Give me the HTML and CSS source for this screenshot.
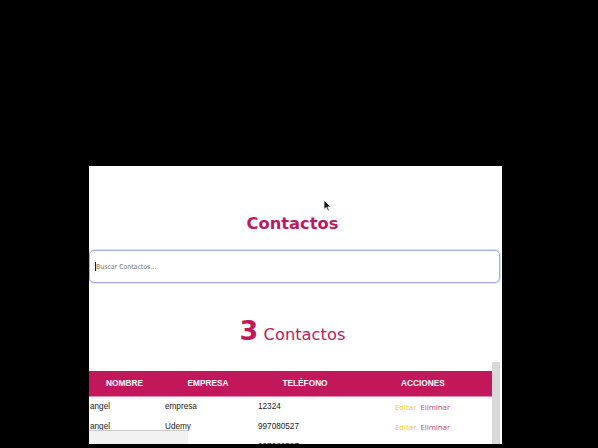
FILE: index.html
```html
<!DOCTYPE html>
<html lang="es">
<head>
<meta charset="utf-8">
<title>Contactos</title>
<link rel="stylesheet" href="styles.css">
</head>
<body>
<div class="panel">
  <h1 class="title">Contactos</h1>
  <div class="search">
    <input class="search-input" type="text" placeholder="Buscar Contactos...">
    <span class="caret"></span>
  </div>
  <h2 class="count"><span class="num">3</span><span class="label"> Contactos</span></h2>
  <div class="list">
    <div class="table-wrap">
      <table class="table">
        <colgroup>
          <col class="c1"><col class="c2"><col class="c3"><col class="c4">
        </colgroup>
        <thead>
          <tr><th>NOMBRE</th><th>EMPRESA</th><th>TELÉFONO</th><th>ACCIONES</th></tr>
        </thead>
        <tbody>
          <tr><td>angel</td><td class="co">empresa</td><td class="ph">12324</td><td class="actions"><a class="edit">Editar</a><a class="del">Eliminar</a></td></tr>
          <tr><td>angel</td><td class="co">Udemy</td><td class="ph">997080527</td><td class="actions"><a class="edit">Editar</a><a class="del">Eliminar</a></td></tr>
          <tr><td>juan</td><td class="co">Udemy</td><td class="ph">997080527</td><td class="actions"><a class="edit">Editar</a><a class="del">Eliminar</a></td></tr>
        </tbody>
      </table>
    </div>
    <div class="vscroll"></div>
  </div>
  <div class="hbox"></div>
  <svg class="pointer" width="9" height="13" viewBox="0 0 9 13"><path d="M1 1 L1 10.5 L3.3 8.4 L5 12 L6.4 11.4 L4.8 7.9 L7.8 7.9 Z" fill="#111" stroke="#fff" stroke-width="0.8"/></svg>
</div>
</body>
</html>
```

FILE: styles.css
```css
html, body {
  margin: 0;
  padding: 0;
  background: #000;
}
body {
  width: 598px;
  height: 448px;
  overflow: hidden;
  font-family: "DejaVu Sans", sans-serif;
}
.panel {
  position: relative;
  margin: 166px 0 0 89px;
  width: 413px;
  height: 278px;
  background: #fff;
  overflow: hidden;
}
.title {
  margin: 0;
  padding: 48px 6px 0 0;
  font-size: 16.3px;
  line-height: 20px;
  font-weight: bold;
  text-align: center;
  color: #c2185b;
}
.search {
  position: relative;
  margin-top: 16px;
  width: 411px;
}
.search-input {
  display: block;
  box-sizing: border-box;
  width: 411px;
  height: 33px;
  margin: 0;
  padding: 0 0 0 6px;
  border: 1px solid #a2b1de;
  border-radius: 5px;
  box-shadow: 0 0 0 1px rgba(150, 170, 225, 0.35);
  font-family: "DejaVu Sans Condensed", "DejaVu Sans", sans-serif;
  font-size: 6.9px;
  color: #333;
  outline: none;
  caret-color: transparent;
}
.search-input::placeholder {
  color: #6e6e6e;
}
.caret {
  position: absolute;
  left: 6px;
  top: 12px;
  width: 1px;
  height: 9px;
  background: #222;
}
.count {
  margin: 32px 0 0;
  padding-right: 6px;
  text-align: center;
  line-height: 32px;
  font-size: 27px;
  font-weight: normal;
  color: #c2185b;
}
.count .num {
  font-weight: bold;
}
.count .label {
  font-size: 16.3px;
}
.list {
  display: flex;
  margin-top: 11px;
}
.table-wrap {
  width: 403px;
  padding-top: 9px;
}
.vscroll {
  width: 8px;
  height: 90px;
  background: #d9d9d9;
}
.table {
  width: 403px;
  border-collapse: collapse;
  table-layout: fixed;
  font-family: "Liberation Sans", Arial, sans-serif;
}
.c1 { width: 71px; }
.c2 { width: 96px; }
.c3 { width: 98px; }
.c4 { width: 138px; }
.table th {
  height: 25px;
  padding: 0;
  background: #c2185b;
  color: #fff;
  font-size: 8.3px;
  font-weight: bold;
  text-align: center;
  border-bottom: 1px solid #e98bb0;
  box-sizing: border-box;
}
.table td {
  height: 20px;
  padding: 0 0 0 1px;
  font-size: 8.2px;
  color: #222;
  white-space: nowrap;
}
.table td.co {
  padding-left: 5px;
}
.table td.ph {
  padding-left: 2px;
}
.table td.actions {
  padding-left: 41px;
  font-family: "Open Sans", sans-serif;
  font-size: 7.8px;
}
.edit {
  color: #f4c73a;
  margin-right: 4px;
}
.del {
  color: #c63d79;
}
.hbox {
  position: absolute;
  left: 0;
  top: 264px;
  width: 99px;
  height: 14px;
  background: #f2f2f2;
  border-top: 1px solid #c9c9c9;
}
.pointer {
  position: absolute;
  left: 234px;
  top: 33px;
}
```
